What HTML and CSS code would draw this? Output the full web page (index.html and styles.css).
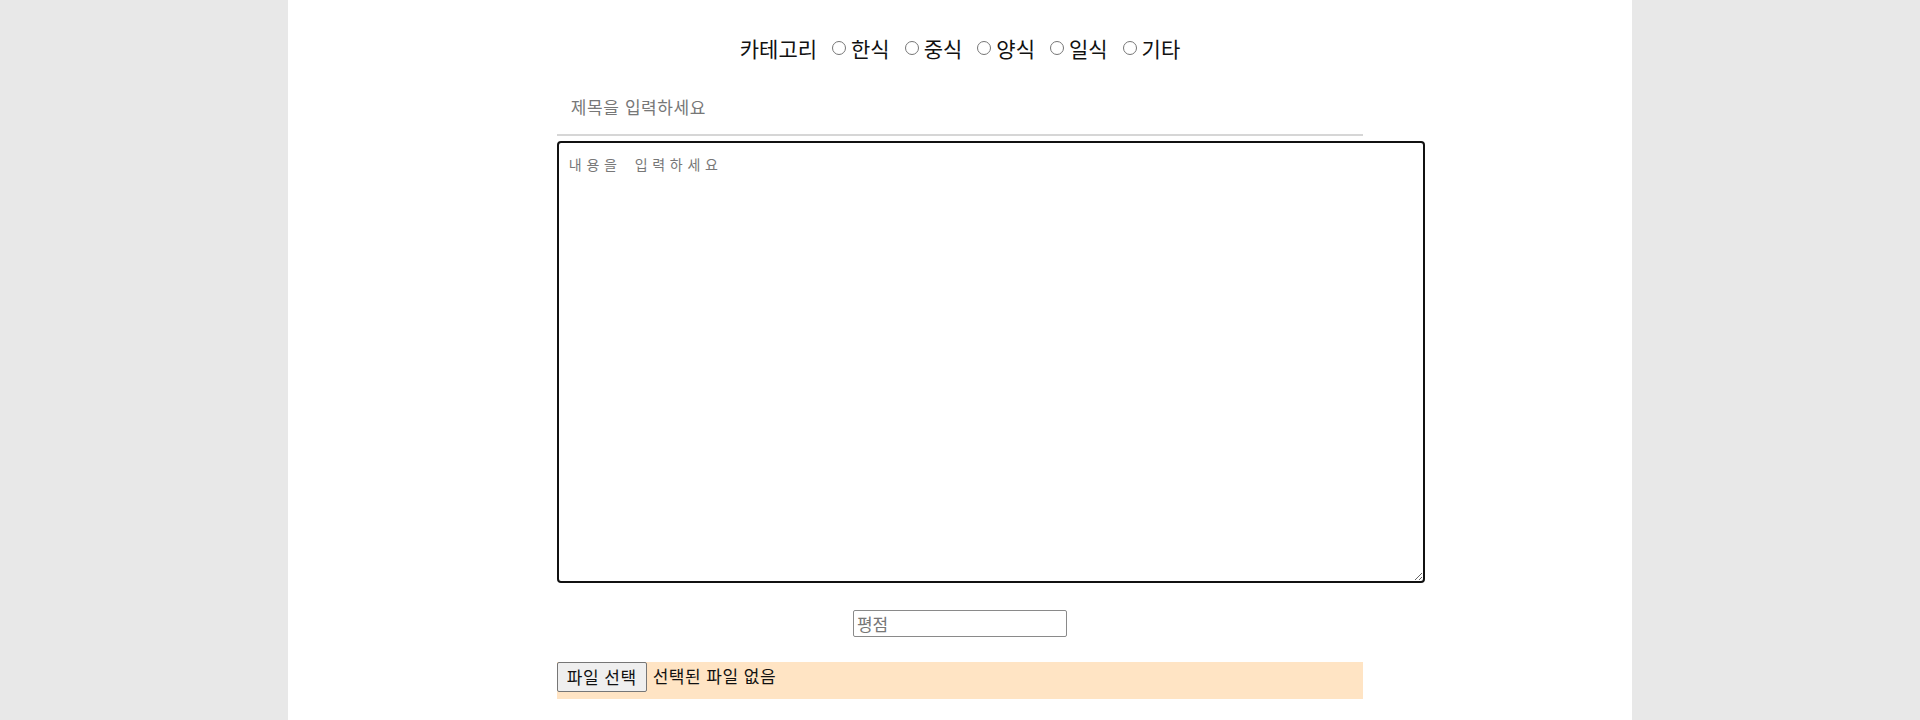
FILE: index.html
```html
<!DOCTYPE html><html lang="ko">
<head>
  <meta charset="UTF-8">
  <meta name="viewport" content="width=device-width, initial-scale=1.0">
  <title>글쓰기</title>
  <link rel="stylesheet" href="styles.css">
</head>
<body>
  <div class="page">
    <form class="write-form">
      <div class="category">
        <span class="category-title">카테고리</span>
        <label><input type="radio" name="category" value="korean">한식</label>
        <label><input type="radio" name="category" value="chinese">중식</label>
        <label><input type="radio" name="category" value="western">양식</label>
        <label><input type="radio" name="category" value="japanese">일식</label>
        <label><input type="radio" name="category" value="etc">기타</label>
      </div>
      <input type="text" class="title-input" placeholder="제목을 입력하세요">
      <textarea class="content-input" placeholder="내용을 입력하세요"></textarea>
      <div class="rating">
        <input type="text" class="rating-input" placeholder="평점">
      </div>
      <div class="file-box">
        <label class="file-button" for="fileInput">파일 선택</label>
        <span class="file-name">선택된 파일 없음</span>
        <input type="file" id="fileInput" class="file-hidden">
      </div>
    </form>
  </div>
</body>
</html>
```

FILE: styles.css
```css
html, body { height: 100%; }
body { margin: 0; background: #e8e8e8; font-family: "Noto Sans CJK KR", "Noto Sans", sans-serif; color: #111; }
.page { width: 70%; min-height: 100%; margin: 0 auto; background: #fff; overflow: hidden; }
.write-form { width: 60%; margin: 0 auto; }
.category { display: flex; justify-content: center; align-items: center; gap: 11px; margin-top: 34px; font-size: 21px; line-height: 28px; }
.category label { display: flex; align-items: center; }
.category input[type="radio"] { width: 14px; height: 14px; margin: 0 5px 0 4px; }
.title-input { display: block; box-sizing: border-box; width: 100%; margin-top: 22px; padding: 13px 14px 17px; border: none; border-bottom: 2px solid #d6d6d6; font-family: inherit; font-size: 17px; letter-spacing: 0.6px; line-height: 20px; outline: none; }
.title-input::placeholder { color: #777; }
.content-input { display: block; box-sizing: border-box; width: 868px; height: 442px; margin-top: 5px; padding: 13px 10px; border: 2px solid #111; border-radius: 4px; font-family: "DejaVu Sans Mono", "Noto Sans CJK KR", monospace; font-size: 14px; letter-spacing: 4.7px; line-height: 18px; outline: none; }
.content-input::placeholder { color: #777; }
.rating { text-align: center; margin-top: 27px; line-height: 0; }
.rating-input { box-sizing: border-box; width: 214px; height: 27px; padding: 1px 3px; border: 1px solid #8a8a8a; border-radius: 2px; font-family: inherit; font-size: 17px; }
.rating-input::placeholder { color: #777; }
.file-box { display: flex; align-items: flex-start; gap: 6px; height: 37px; margin-top: 25px; background: bisque; font-size: 17px; letter-spacing: 0.5px; }
.file-button { box-sizing: border-box; height: 30px; padding: 0 9px; line-height: 28px; background: #efefef; border: 1px solid #767676; border-radius: 2px; color: #111; }
.file-name { line-height: 28px; color: #111; }
.file-hidden { display: none; }
```
